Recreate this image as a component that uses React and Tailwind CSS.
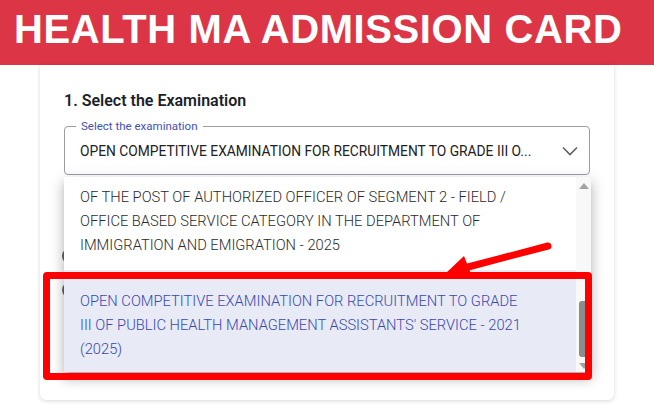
const options = [
  [
    "OF THE POST OF AUTHORIZED OFFICER OF SEGMENT 2 - FIELD /",
    "OFFICE BASED SERVICE CATEGORY IN THE DEPARTMENT OF",
    "IMMIGRATION AND EMIGRATION - 2025",
  ],
  [
    "OPEN COMPETITIVE EXAMINATION FOR RECRUITMENT TO GRADE",
    "III OF PUBLIC HEALTH MANAGEMENT ASSISTANTS' SERVICE - 2021",
    "(2025)",
  ],
];

const Chevron = () => (
  <svg width="16" height="10" viewBox="0 0 16 10" fill="none">
    <path d="M1 1.5 L8 8.5 L15 1.5" stroke="#5f5f5f" strokeWidth="1.6" />
  </svg>
);

const Arrow = () => (
  <svg
    className="absolute left-0 top-0 pointer-events-none"
    width="574"
    height="335"
    viewBox="0 0 574 335"
  >
    <line
      x1="508"
      y1="181"
      x2="428"
      y2="202"
      stroke="#ff0000"
      strokeWidth="7"
      strokeLinecap="round"
    />
    <polygon points="406,208 424,191 433,214" fill="#ff0000" />
  </svg>
);

export default function App() {
  return (
    <div className="min-h-screen bg-white font-['Roboto',sans-serif]">
      <header className="h-[65px] bg-[#dc3545] pl-[14px] pt-[9px]">
        <h1 className="font-['Liberation_Sans',Arial,sans-serif] text-[40px] leading-[40px] font-bold text-white tracking-[0.6px]">
          HEALTH MA ADMISSION CARD
        </h1>
      </header>

      <div className="relative ml-[40px] w-[574px] h-[335px] bg-white rounded-b-md shadow-[0_1px_4px_rgba(0,0,0,0.16)] px-[24px] pt-[26px]">
        <h2 className="text-[16px] leading-[20px] font-semibold text-[#1b1f2a]">
          1. Select the Examination
        </h2>

        <div className="relative mt-[15px] h-[49px] rounded-[4px] border border-[#9c9ca6] flex items-center pl-[15px] pr-[11px]">
          <span className="absolute -top-[8px] left-[11px] bg-white px-[5px] text-[11.5px] leading-[14px] text-[#3f51b5]">
            Select the examination
          </span>
          <span className="flex-1 text-[13.8px] leading-[20px] text-[#212121] whitespace-nowrap">
            OPEN COMPETITIVE EXAMINATION FOR RECRUITMENT TO GRADE III O...
          </span>
          <Chevron />
        </div>

        <div className="flex flex-col gap-[18px] mt-[73px] -ml-[2px]">
          <div className="w-4 h-4 rounded-full border-2 border-[#666]" />
          <div className="w-4 h-4 rounded-full border-2 border-[#666]" />
        </div>

        <div className="absolute left-[24px] top-[112px] w-[527px] h-[195px] bg-white flex overflow-hidden shadow-[0_5px_5px_-3px_rgba(0,0,0,0.2),0_8px_10px_1px_rgba(0,0,0,0.14),0_3px_14px_2px_rgba(0,0,0,0.12)]">
          <ul className="flex-1 text-[14.7px] leading-[24px] font-light whitespace-nowrap">
            <li className="pl-[16px] pt-[8px] pb-[13px] text-[#2a2a2a]">
              {options[0].map((line) => (
                <div key={line}>{line}</div>
              ))}
            </li>
            <li className="pl-[16px] pt-[19px] pb-[11px] bg-[#e8eaf6] text-[#3949ab]">
              {options[1].map((line) => (
                <div key={line}>{line}</div>
              ))}
            </li>
          </ul>
          <div className="w-[15px] bg-[#f8f8f8] flex flex-col items-center pt-[6px] pb-[3px]">
            <div className="w-0 h-0 border-l-[5px] border-r-[5px] border-b-[6px] border-l-transparent border-r-transparent border-b-[#a3a3a3]" />
            <div className="flex-1" />
            <div className="w-[9px] h-[56px] rounded-[3px] bg-[#8c8c8c] mb-[6px]" />
            <div className="w-0 h-0 border-l-[5px] border-r-[5px] border-t-[6px] border-l-transparent border-r-transparent border-t-[#a3a3a3]" />
          </div>
        </div>

        <Arrow />

        <div className="absolute left-[3px] top-[207px] w-[549px] h-[108px] border-[7px] border-[#ff0000] rounded-[4px] pointer-events-none" />
      </div>
    </div>
  );
}
